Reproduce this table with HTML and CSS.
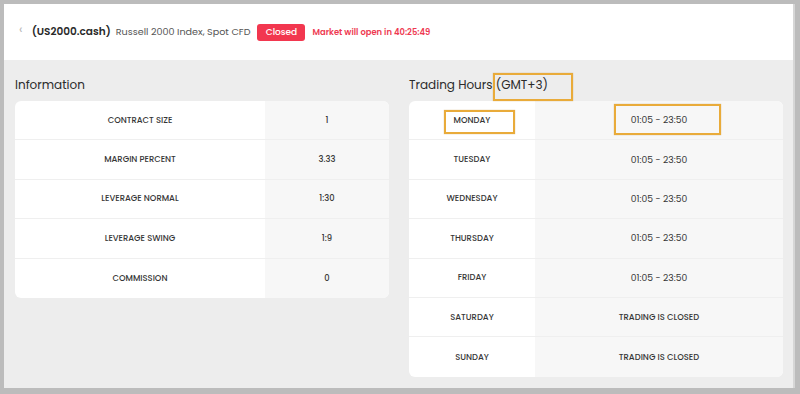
FILE: index.html
```html
<!DOCTYPE html>
<html>
<head>
<meta charset="utf-8">
<link rel="stylesheet" href="styles.css">
</head>
<body>
<div class="frame">
  <header class="header">
    <span class="back">&#8249;</span>
    <span class="symbol">(US2000.cash)</span>
    <span class="name">Russell 2000 Index, Spot CFD</span>
    <span class="badge">Closed</span>
    <span class="opens">Market will open in 40:25:49</span>
  </header>
  <main class="content">
    <section class="panel">
      <h2 class="title">Information</h2>
      <div class="card info">
        <div class="row"><div class="cell key">CONTRACT SIZE</div><div class="cell val">1</div></div>
        <div class="row"><div class="cell key">MARGIN PERCENT</div><div class="cell val">3.33</div></div>
        <div class="row"><div class="cell key">LEVERAGE NORMAL</div><div class="cell val">1:30</div></div>
        <div class="row"><div class="cell key">LEVERAGE SWING</div><div class="cell val">1:9</div></div>
        <div class="row"><div class="cell key">COMMISSION</div><div class="cell val">0</div></div>
      </div>
    </section>
    <section class="panel">
      <h2 class="title">Trading Hours <span class="mark mark-gmt">(GMT+3)</span></h2>
      <div class="card hours">
        <div class="row"><div class="cell key"><span class="mark mark-day">MONDAY</span></div><div class="cell val time"><span class="mark mark-time">01:05 - 23:50</span></div></div>
        <div class="row"><div class="cell key">TUESDAY</div><div class="cell val time">01:05 - 23:50</div></div>
        <div class="row"><div class="cell key">WEDNESDAY</div><div class="cell val time">01:05 - 23:50</div></div>
        <div class="row"><div class="cell key">THURSDAY</div><div class="cell val time">01:05 - 23:50</div></div>
        <div class="row"><div class="cell key">FRIDAY</div><div class="cell val time">01:05 - 23:50</div></div>
        <div class="row"><div class="cell key">SATURDAY</div><div class="cell val">TRADING IS CLOSED</div></div>
        <div class="row"><div class="cell key">SUNDAY</div><div class="cell val">TRADING IS CLOSED</div></div>
      </div>
    </section>
  </main>
</div>
</body>
</html>
```
FILE: styles.css
```css
* { box-sizing: border-box; }
html, body { margin: 0; padding: 0; }
body {
  background: #bcbcbc;
  font-family: "Poppins", "Inter", "Noto Sans", sans-serif;
  color: #333;
  width: 800px;
  height: 394px;
  overflow: hidden;
}
.frame {
  margin: 4px 7px 0 4px;
  height: 384px;
  background: #ededed;
  box-shadow: 2px 0 0 #d6d6d6;
}
.header {
  height: 56px;
  background: #fff;
  display: flex;
  align-items: center;
  padding-left: 15px;
}
.back {
  color: #b8b8b8;
  font-size: 13px;
  margin-right: 9px;
  margin-top: -5px;
}
.symbol {
  font-size: 10.5px;
  font-weight: 600;
  color: #2a2a2a;
  margin-right: 5px;
}
.name {
  font-size: 9.6px;
  color: #555;
  margin-right: 7px;
}
.badge {
  background: #f2374f;
  color: #fff;
  font-size: 9px;
  font-weight: 500;
  border-radius: 3px;
  width: 48px;
  height: 17px;
  display: flex;
  align-items: center;
  justify-content: center;
  margin-right: 7px;
}
.opens {
  color: #ee3a52;
  font-size: 8.4px;
  font-weight: 600;
}
.content {
  display: flex;
  gap: 20px;
  padding: 15px 10px 0 11px;
}
.panel { width: 374px; }
.title {
  margin: 0 0 6px 0;
  height: 20px;
  font-size: 12px;
  font-weight: 400;
  color: #2b2b2b;
  line-height: 20px;
  position: relative;
}
.card {
  background: #fff;
  border-radius: 6px;
  overflow: hidden;
}
.row {
  display: flex;
  height: 39.4px;
  border-bottom: 1px solid #efefef;
}
.row:last-child { border-bottom: none; }
.cell {
  display: flex;
  align-items: center;
  justify-content: center;
  font-size: 8.4px;
  font-weight: 500;
  color: #363636;
}
.cell.val { background: #f7f7f7; }
.cell.time { font-size: 9.2px; font-weight: 400; }
.info .key { width: 250px; }
.info .val { flex: 1; }
.hours .key { width: 126px; }
.hours .val { flex: 1; }
.mark { position: relative; }
.mark::after {
  content: "";
  position: absolute;
  border: 2px solid #e9ab3a;
  box-shadow: 0 0 1px rgba(180,120,20,0.5);
}
.mark-gmt::after { left: -3px; right: -25px; top: -3px; bottom: -8px; }
.mark-day::after { left: -10px; right: -25px; top: -4px; bottom: -7px; }
.mark-time::after { left: -17px; right: -34px; top: -9px; bottom: -8px; }
```
